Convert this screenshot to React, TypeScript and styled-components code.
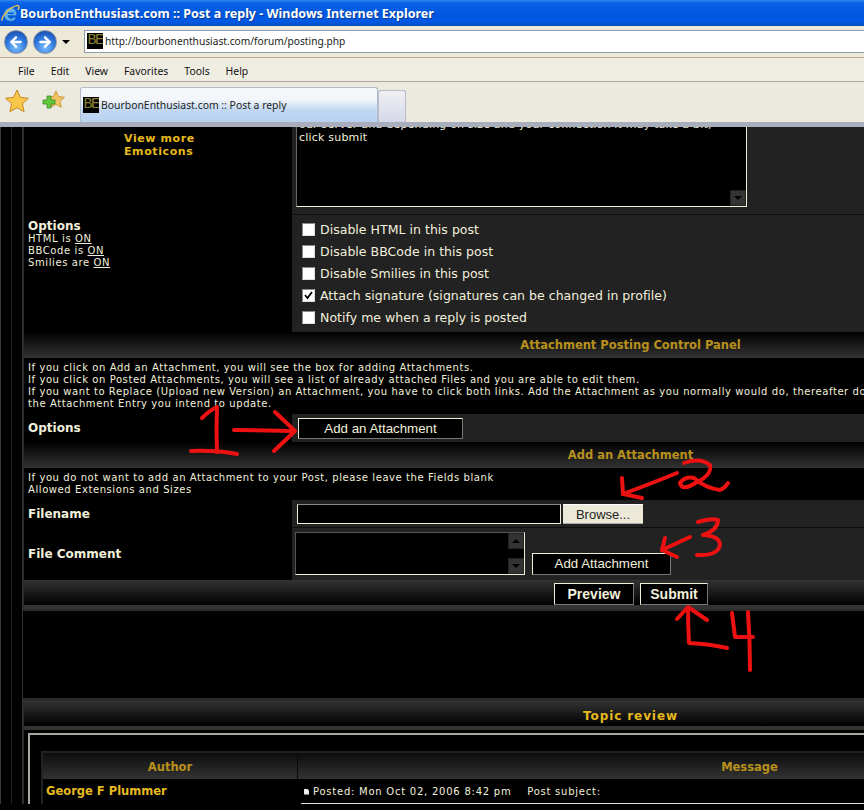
import styled, { createGlobalStyle } from "styled-components";
import { ArrowLeft, ArrowRight } from "lucide-react";

const Global = createGlobalStyle`
  html, body {
    margin: 0;
    padding: 0;
    background: #000;
    overflow: hidden;
  }
`;

const Shell = styled.div`
  position: relative;
  width: 864px;
  height: 810px;
  overflow: hidden;
  display: flex;
  flex-direction: column;
  font-family: "DejaVu Sans", Verdana, sans-serif;
`;

const TitleBar = styled.div`
  height: 26px;
  flex: none;
  display: flex;
  align-items: center;
  padding-left: 1px;
  background: linear-gradient(to bottom, #2f86ea 0, #0a62e6 3px, #0058e0 14px, #0058e4 22px, #0a4cb8 26px);
  color: #fff;
  font: bold 12.5px "Noto Sans", sans-serif;
  white-space: nowrap;
  text-shadow: 1px 1px 0 #0a3a90;
`;

const AddressBar = styled.div`
  height: 32px;
  flex: none;
  display: flex;
  align-items: center;
  background: #ece9d8;
  padding-left: 4px;
  border-bottom: 1px solid #b8a898;
  box-sizing: border-box;
`;

const NavButton = styled.div<{ $forward?: boolean }>`
  width: 24px;
  height: 24px;
  box-sizing: border-box;
  border-radius: 50%;
  margin-left: ${(p) => (p.$forward ? "5px" : "0")};
  display: flex;
  align-items: center;
  justify-content: center;
  color: #fff;
  background: radial-gradient(circle at 50% 75%, #7cc0ff 0, #2a70d8 55%, #123f98 100%);
  border: 1px solid #8a94a8;
`;

const DropCaret = styled.div`
  width: 0;
  height: 0;
  margin: 0 14px 0 5px;
  border-left: 4px solid transparent;
  border-right: 4px solid transparent;
  border-top: 4px solid #000;
`;

const UrlBox = styled.div`
  flex: 1;
  height: 21px;
  display: flex;
  align-items: center;
  gap: 2px;
  background: #fff;
  border-top: 1px solid #8e9cb0;
  border-bottom: 1px solid #8e9cb0;
  border-left: 1px solid #8e9cb0;
  font: 10.2px "Noto Sans", sans-serif;
  color: #222;
  padding-left: 2px;
  margin-top: -1px;
`;

const Favicon = styled.div`
  width: 16px;
  height: 16px;
  flex: none;
  background: #000;
  color: #8a8030;
  font: 15px/16px "Liberation Mono", monospace;
  letter-spacing: -1.5px;
  text-align: center;
  overflow: hidden;
`;

const MenuBar = styled.div`
  height: 24px;
  flex: none;
  display: flex;
  align-items: center;
  gap: 16px;
  padding: 2px 0 0 18px;
  box-sizing: border-box;
  background: #efece2;
  border-bottom: 1px solid #aca899;
  font: 10.4px "Noto Sans", sans-serif;
  color: #111;
`;

const TabBar = styled.div`
  height: 45px;
  flex: none;
  display: flex;
  align-items: flex-end;
  box-sizing: border-box;
  background: #ece9df;
  border-bottom: 5px solid #a8aebc;
`;

const StarSlot = styled.div<{ $w: number }>`
  width: ${(p) => p.$w}px;
  height: 36px;
  margin-bottom: 3px;
  display: flex;
  align-items: center;
  justify-content: center;
`;

const Tab = styled.div`
  width: 298px;
  height: 35px;
  margin-left: 8px;
  box-sizing: border-box;
  display: flex;
  align-items: center;
  gap: 2px;
  padding: 0 0 1px 2px;
  border: 1px solid #b4bccb;
  border-bottom: none;
  border-radius: 3px 3px 0 0;
  background: linear-gradient(to bottom, #f6f8fc 0, #f2f5fa 35%, #c2d8f2 65%, #b8d2f0 100%);
  font: 10.4px "Noto Sans", sans-serif;
  color: #222;
`;

const NewTab = styled.div`
  width: 28px;
  height: 32px;
  box-sizing: border-box;
  border: 1px solid #b8bcc8;
  border-bottom: none;
  border-radius: 3px 3px 0 0;
  background: linear-gradient(to bottom, #f0f0f4, #d4d8e8);
`;

const Viewport = styled.div`
  flex: 1;
  overflow: hidden;
  background: #000;
  color: #f2f0dc;
`;

/* page is scrolled, so the first 20px of it sit under the browser chrome */
const ScrollContent = styled.div`
  margin-top: -20px;
  width: 1300px;
  border-left: 1px solid #3a3a3a;
  padding-left: 10px;
`;

const MiddleRail = styled.div`
  border-left: 1px solid #222;
  padding-left: 10px;
`;

const InnerRail = styled.div`
  border-left: 2px solid #333;
`;

const Frame = styled.div`
  width: 1214px;
  margin-left: -1px;
  box-sizing: border-box;
  border-left: 1px solid #2b2b2b;
`;

const BottomFrame = styled(Frame)`
  border-bottom: 2px solid #2c2c2c;
`;

const Row = styled.div`
  display: grid;
  grid-template-columns: 268px 1fr;
`;

const LeftCell = styled.div<{ $center?: boolean }>`
  padding: ${(p) => (p.$center ? "0" : "0 0 0 4px")};
  display: flex;
  flex-direction: column;
  font-size: 10px;
  line-height: 12px;
  letter-spacing: 0.6px;
`;

const RightCell = styled.div<{ $line?: boolean }>`
  background: #222;
  padding-left: 4px;
  border-top: ${(p) => (p.$line ? "1px solid #0c0c0c" : "none")};
`;

const MessageCell = styled(RightCell)`
  height: 107px;
`;

const EmoticonLink = styled.a`
  margin: 25px 0 0 0;
  padding-left: 100px;
  color: #e6b91e;
  font-weight: bold;
  font-size: 11px;
  line-height: 13px;
`;

const MessageArea = styled.div`
  position: relative;
  width: 451px;
  height: 97px;
  margin-top: 3px;
  box-sizing: border-box;
  padding: 7px 2px 0;
  background: #000;
  border: 1px solid #f0eed8;
  border-top-color: #444;
  border-left-color: #666;
  font-size: 11px;
  line-height: 13px;
  letter-spacing: 0.2px;
  white-space: nowrap;
`;

const ScrollArrow = styled.div<{ $up?: boolean }>`
  position: absolute;
  right: 0;
  width: 16px;
  height: 16px;
  ${(p) => (p.$up ? "top: 0;" : "bottom: 0;")}
  background: #333;
  border: 1px solid #222;
  box-sizing: border-box;
  display: flex;
  align-items: center;
  justify-content: center;
  &::after {
    content: "";
    border-left: 4px solid transparent;
    border-right: 4px solid transparent;
    ${(p) => (p.$up ? "border-bottom: 4px solid #000;" : "border-top: 4px solid #000;")}
  }
`;

const OptionsHeading = styled.div`
  font-size: 12px;
  font-weight: bold;
  line-height: 13px;
  letter-spacing: 0;
  margin-top: 6px;
`;

const OnLink = styled.a`
  text-decoration: underline;
`;

const CheckList = styled.div`
  display: flex;
  flex-direction: column;
  padding: 3px 0 4px 6px;
`;

const CheckRow = styled.div`
  height: 22px;
  display: flex;
  align-items: center;
  gap: 5px;
  font-size: 12.5px;
  letter-spacing: 0.03px;
  white-space: nowrap;
`;

const CheckBox = styled.span`
  width: 13px;
  height: 13px;
  box-sizing: border-box;
  background: #fff;
  border: 1px solid #8a8a8a;
  border-bottom-color: #ddd;
  border-right-color: #ddd;
  display: flex;
  align-items: center;
  justify-content: center;
`;

const SectionHeader = styled.div`
  height: 26px;
  display: flex;
  align-items: center;
  justify-content: center;
  background: linear-gradient(to bottom, #000 0, #333 100%);
  color: #b8901c;
  font-size: 11.5px;
  font-weight: bold;
  white-space: nowrap;
`;

const InfoText = styled.div<{ $h: number }>`
  height: ${(p) => p.$h}px;
  box-sizing: border-box;
  padding: 4px 0 0 4px;
  font-size: 10px;
  line-height: 12px;
  letter-spacing: 0.58px;
  white-space: nowrap;
`;

const FieldLabel = styled.div`
  padding-left: 4px;
  font-size: 12px;
  font-weight: bold;
  line-height: 14px;
  height: 100%;
  display: flex;
  align-items: center;
`;

const DarkButton = styled.div<{ $w: number; $bold?: boolean; $tall?: boolean }>`
  width: ${(p) => p.$w}px;
  height: ${(p) => (p.$bold || p.$tall ? "22px" : "21px")};
  box-sizing: border-box;
  padding-bottom: 1px;
  background: #000;
  border: 1px solid #f0eed8;
  border-right-color: #777;
  border-bottom-color: #777;
  display: flex;
  align-items: center;
  justify-content: center;
  font: ${(p) => (p.$bold ? "bold 14px" : "13.3px")} "Liberation Sans", Arial, sans-serif;
  color: #f2f0dc;
  white-space: nowrap;
`;

const OptionButtonCell = styled(RightCell)`
  height: 28px;
  box-sizing: border-box;
  padding: 4px 0 0 6px;
`;

const FileCell = styled(RightCell)`
  height: 28px;
  display: flex;
  gap: 2px;
  padding: 4px 0 0 5px;
  border-bottom: 1px solid #0c0c0c;
  box-sizing: border-box;
`;

const FileInput = styled.div`
  width: 264px;
  height: 20px;
  box-sizing: border-box;
  background: #000;
  border: 1px solid #f0eed8;
  border-top-color: #888;
`;

const BrowseButton = styled.div`
  width: 80px;
  height: 20px;
  background: #ece9d8;
  border-top: 1px solid #fff;
  border-bottom: 1px solid #aaa;
  box-sizing: border-box;
  display: flex;
  align-items: center;
  justify-content: center;
  font: 13px "Liberation Sans", Arial, sans-serif;
  color: #222;
`;

const CommentCell = styled(RightCell)`
  height: 52px;
  display: flex;
  align-items: flex-end;
  gap: 7px;
  padding: 0 0 5px 3px;
  box-sizing: border-box;
`;

const CommentBox = styled.div`
  position: relative;
  width: 230px;
  height: 43px;
  box-sizing: border-box;
  background: #000;
  border: 1px solid #f0eed8;
  border-top-color: #555;
  border-left-color: #555;
`;

const FooterBar = styled.div`
  height: 25px;
  display: flex;
  justify-content: flex-start;
  gap: 6px;
  box-sizing: border-box;
  padding: 3px 0 0 530px;
  background: linear-gradient(to bottom, #333 0, #000 100%);
`;

const GreyBar = styled.div`
  height: 4px;
  background: #333;
`;

const Gap = styled.div`
  height: 87px;
  background: #000;
  margin-left: -1px;
`;

const TopicFrame = styled(Frame)`
  border-top: 3px solid #2a2a2a;
`;

const TopicTitle = styled(SectionHeader)`
  height: 25px;
  box-sizing: border-box;
  padding-top: 4px;
  background: linear-gradient(to bottom, #333 0, #000 100%);
  color: #e6b91e;
  font-size: 12px;
  letter-spacing: 0.9px;
`;

const TopicInner = styled.div`
  margin: 3px 0 0 4px;
  border-top: 2px solid #a8a8a0;
  border-left: 2px solid #a8a8a0;
  padding: 16px 0 0 11px;
`;

const ReviewTable = styled.div`
  width: 1158px;
  border-top: 2px solid #222;
  border-left: 2px solid #222;
`;

const ReviewHead = styled.div`
  display: grid;
  grid-template-columns: 254px 1fr;
  height: 26px;
  background: linear-gradient(to bottom, #0c0c0c 0, #333 100%);
`;

const HeadCell = styled.div<{ $divider?: boolean }>`
  display: flex;
  align-items: center;
  justify-content: center;
  padding-top: 2px;
  color: #b8901c;
  font-size: 11.5px;
  font-weight: bold;
  border-left: ${(p) => (p.$divider ? "1px solid #0a0a0a" : "none")};
`;

const ReviewRow = styled.div`
  display: grid;
  grid-template-columns: 254px 1fr;
`;

const AuthorName = styled.div`
  padding: 5px 0 0 3px;
  color: #e6b91e;
  font-size: 11.5px;
  font-weight: bold;
`;

const PostMeta = styled.div`
  margin-left: 4px;
  height: 25px;
  box-sizing: border-box;
  padding: 1px 0 0 3px;
  border-bottom: 1px solid #ddd;
  display: flex;
  align-items: center;
  gap: 4px;
  font-size: 10px;
  align-self: start;
  letter-spacing: 0.76px;
  white-space: pre;
`;

const PostIcon = styled.span`
  width: 5px;
  height: 6px;
  background: #eee;
  clip-path: polygon(0 0, 60% 0, 100% 35%, 100% 100%, 0 100%);
`;

const Scribbles = styled.svg`
  position: absolute;
  left: 0;
  top: 0;
  pointer-events: none;
`;

const strokes = [
  // 1 and its arrow
  "M202 418 Q210 410 217 407 Q216 430 217 452",
  "M191 451 Q215 450 237 454",
  "M234 430 L293 431",
  "M275 412 L295 431 L274 451",
  // 2 and its arrow
  "M677 473 Q655 482 623 494",
  "M622 478 L623 494 L642 498",
  "M684 463 Q700 457 710 465 Q712 475 697 482 Q682 492 680 483 Q685 476 694 478 Q705 488 720 490 Q725 488 728 483",
  // 3 and its arrow
  "M690 537 L662 550",
  "M665 538 L662 550 L677 557",
  "M698 522 Q710 518 718 520 Q718 530 703 535 Q720 536 720 545 Q718 556 697 555",
  // 4 and its arrow
  "M677 619 L688 607 L707 620",
  "M688 608 Q688 625 689 643 Q710 644 727 648",
  "M732 613 L735 637 L753 637",
  "M748 612 Q750 640 750 670",
];

const IeLogo = () => (
  <svg width="19" height="19" viewBox="0 0 18 18">
    <path d="M3 11a6 6 0 0 1 11-4.500a6 6 0 0 1 .6 4.500H6.500a3 3 0 0 0 5.500 1.500h2.500A6 6 0 0 1 3 11z" fill="#5fb4f0" stroke="#1a62b8" strokeWidth=".6" />
    <path d="M1 16C0 12 8 3 15 1.500c2.500-.5 2.500 2 1 4" fill="none" stroke="#e8c24a" strokeWidth="1.300" />
    <rect x="6.500" y="8" width="5.500" height="1.500" fill="#0058e0" />
  </svg>
);

const Star = () => (
  <svg width="26" height="26" viewBox="0 0 26 26">
    <path d="M13 2l3.400 7.400 8 .9-6 5.400 1.700 8L13 19.700 5.900 23.700l1.700-8-6-5.400 8-.9z" fill="#f8c648" stroke="#c88a20" strokeWidth="1" />
  </svg>
);

const AddStar = () => (
  <svg width="26" height="26" viewBox="0 0 26 26">
    <path d="M16 3l2.500 5.600 6 .7-4.500 4 1.300 6L16 16.300 10.700 19.300l1.300-6-4.500-4 6-.7z" fill="#f0c464" stroke="#c88a20" strokeWidth=".8" />
    <path d="M7 8h4v4h4v4h-4v4H7v-4H3v-4h4z" fill="#62c83c" stroke="#3a8a2a" strokeWidth=".8" />
  </svg>
);

const CheckMark = () => (
  <svg width="9" height="9" viewBox="0 0 9 9">
    <path d="M1 4l2.500 3L8 1" fill="none" stroke="#000" strokeWidth="1.800" />
  </svg>
);

const options = [
  { label: "Disable HTML in this post" },
  { label: "Disable BBCode in this post" },
  { label: "Disable Smilies in this post" },
  { label: "Attach signature (signatures can be changed in profile)", checked: true },
  { label: "Notify me when a reply is posted" },
];

const App = () => {
  return (
    <Shell>
      <Global />
      <TitleBar>
        <IeLogo />
        BourbonEnthusiast.com :: Post a reply - Windows Internet Explorer
      </TitleBar>
      <AddressBar>
        <NavButton>
          <ArrowLeft size={16} strokeWidth={3.5} />
        </NavButton>
        <NavButton $forward>
          <ArrowRight size={16} strokeWidth={3.5} />
        </NavButton>
        <DropCaret />
        <UrlBox>
          <Favicon>BE</Favicon>
          http://bourbonenthusiast.com/forum/posting.php
        </UrlBox>
      </AddressBar>
      <MenuBar>
        <span>File</span>
        <span>Edit</span>
        <span>View</span>
        <span>Favorites</span>
        <span>Tools</span>
        <span>Help</span>
      </MenuBar>
      <TabBar>
        <StarSlot $w={34}>
          <Star />
        </StarSlot>
        <StarSlot $w={38}>
          <AddStar />
        </StarSlot>
        <Tab>
          <Favicon>BE</Favicon>
          BourbonEnthusiast.com :: Post a reply
        </Tab>
        <NewTab />
      </TabBar>
      <Viewport>
        <ScrollContent>
          <MiddleRail>
            <InnerRail>
              <BottomFrame>
                <Row>
                  <LeftCell $center>
                    <EmoticonLink>
                      View more
                      <br />
                      Emoticons
                    </EmoticonLink>
                  </LeftCell>
                  <MessageCell>
                    <MessageArea>
                      our server and depending on size and your connection it may take a bit,
                      <br />
                      click submit
                      <ScrollArrow />
                    </MessageArea>
                  </MessageCell>
                </Row>
                <Row>
                  <LeftCell>
                    <OptionsHeading>Options</OptionsHeading>
                    <span>
                      HTML is <OnLink>ON</OnLink>
                    </span>
                    <span>
                      BBCode is <OnLink>ON</OnLink>
                    </span>
                    <span>
                      Smilies are <OnLink>ON</OnLink>
                    </span>
                  </LeftCell>
                  <RightCell $line>
                    <CheckList>
                      {options.map((o) => (
                        <CheckRow key={o.label}>
                          <CheckBox>{o.checked && <CheckMark />}</CheckBox>
                          {o.label}
                        </CheckRow>
                      ))}
                    </CheckList>
                  </RightCell>
                </Row>
                <SectionHeader>Attachment Posting Control Panel</SectionHeader>
                <InfoText $h={56}>
                  If you click on Add an Attachment, you will see the box for adding Attachments.
                  <br />
                  If you click on Posted Attachments, you will see a list of already attached Files and you are able to edit them.
                  <br />
                  If you want to Replace (Upload new Version) an Attachment, you have to click both links. Add the Attachment as you normally would do, thereafter do not forget to click Update on
                  <br />
                  the Attachment Entry you intend to update.
                </InfoText>
                <Row>
                  <FieldLabel>Options</FieldLabel>
                  <OptionButtonCell>
                    <DarkButton $w={165}>Add an Attachment</DarkButton>
                  </OptionButtonCell>
                </Row>
                <SectionHeader>Add an Attachment</SectionHeader>
                <InfoText $h={32}>
                  If you do not want to add an Attachment to your Post, please leave the Fields blank
                  <br />
                  Allowed Extensions and Sizes
                </InfoText>
                <Row>
                  <FieldLabel>Filename</FieldLabel>
                  <FileCell>
                    <FileInput />
                    <BrowseButton>Browse...</BrowseButton>
                  </FileCell>
                </Row>
                <Row>
                  <FieldLabel>File Comment</FieldLabel>
                  <CommentCell>
                    <CommentBox>
                      <ScrollArrow $up />
                      <ScrollArrow />
                    </CommentBox>
                    <DarkButton $w={139} $tall>
                      Add Attachment
                    </DarkButton>
                  </CommentCell>
                </Row>
                <FooterBar>
                  <DarkButton $w={80} $bold>
                    Preview
                  </DarkButton>
                  <DarkButton $w={68} $bold>
                    Submit
                  </DarkButton>
                </FooterBar>
                <GreyBar />
              </BottomFrame>
              <Gap />
              <TopicFrame>
                <TopicTitle>Topic review</TopicTitle>
                <GreyBar />
                <TopicInner>
                  <ReviewTable>
                    <ReviewHead>
                      <HeadCell>Author</HeadCell>
                      <HeadCell $divider>Message</HeadCell>
                    </ReviewHead>
                    <ReviewRow>
                      <AuthorName>George F Plummer</AuthorName>
                      <PostMeta>
                        <PostIcon />
                        {"Posted: Mon Oct 02, 2006 8:42 pm    Post subject:"}
                      </PostMeta>
                    </ReviewRow>
                  </ReviewTable>
                </TopicInner>
              </TopicFrame>
            </InnerRail>
          </MiddleRail>
        </ScrollContent>
      </Viewport>
      <Scribbles width="864" height="810" viewBox="0 0 864 810">
        {strokes.map((d) => (
          <path key={d} d={d} fill="none" stroke="#ee1111" strokeWidth="4" strokeLinecap="round" strokeLinejoin="round" />
        ))}
      </Scribbles>
    </Shell>
  );
};

export default App;
